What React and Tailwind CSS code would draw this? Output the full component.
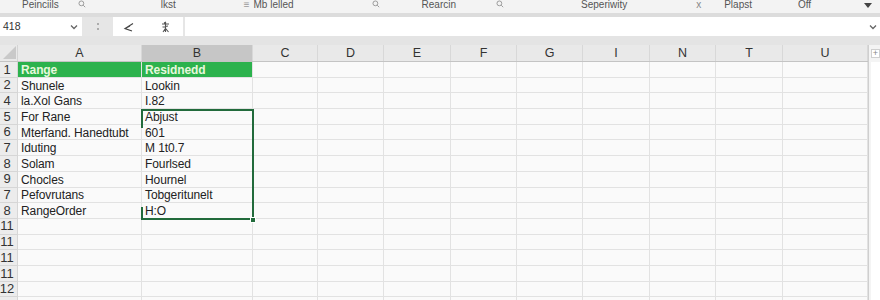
import React from "react";

// column layout of the sheet (widths written out so tailwind picks them up)
const columns = [
  { label: "A", w: "w-[124px]" },
  { label: "B", w: "w-[111px]", active: true },
  { label: "C", w: "w-[65px]" },
  { label: "D", w: "w-[66px]" },
  { label: "E", w: "w-[67px]" },
  { label: "F", w: "w-[66px]" },
  { label: "G", w: "w-[66px]" },
  { label: "I", w: "w-[67px]" },
  { label: "N", w: "w-[66px]" },
  { label: "T", w: "w-[67px]" },
  { label: "U", w: "w-[85px]" },
];

const rows = [
  { n: "1", a: "Range", b: "Residnedd", head: true },
  { n: "2", a: "Shunele", b: "Lookin" },
  { n: "4", a: "la.Xol Gans", b: "I.82" },
  { n: "5", a: "For Rane", b: "Abjust" },
  { n: "6", a: "Mterfand. Hanedtubt", b: "601" },
  { n: "7", a: "Iduting", b: "M 1t0.7" },
  { n: "8", a: "Solam", b: "Fourlsed" },
  { n: "9", a: "Chocles", b: "Hournel" },
  { n: "7", a: "Pefovrutans", b: "Tobgeritunelt" },
  { n: "8", a: "RangeOrder", b: "H:O" },
  { n: "11" },
  { n: "11" },
  { n: "11" },
  { n: "11" },
  { n: "12" },
  { n: "" }, // partly visible row below the fold
];

const SearchIcon = () => (
  <svg width="8" height="8" viewBox="0 0 10 10" className="text-[#999]">
    <circle cx="4.2" cy="4.2" r="3" fill="none" stroke="currentColor" strokeWidth="1.2" />
    <path d="M6.5 6.5 L9 9" stroke="currentColor" strokeWidth="1.2" />
  </svg>
);

const Sep = () => <span className="w-px h-[8px] bg-[#c8c8c8]" />;

const Chevron = () => (
  <svg width="8" height="6" viewBox="0 0 8 6">
    <path d="M1 1.5 L4 4.5 L7 1.5" fill="none" stroke="#666" strokeWidth="1.3" />
  </svg>
);

const App = () => {
  return (
    <div className="w-[880px] h-[300px] overflow-hidden bg-[#fafafa] font-['Liberation_Sans',Arial,sans-serif] text-[#222]">
      {/* ribbon strip */}
      <div className="h-[13px] bg-[#f3f3f3] overflow-hidden flex items-start text-[10px] leading-[11px] text-[#555]">
        <span className="ml-[22px] -mt-[1px]">Peinciils</span>
        <span className="ml-[19px]"><SearchIcon /></span>
        <span className="ml-[3px] mt-[1px]"><Sep /></span>
        <span className="ml-[72px] -mt-[1px]">lkst</span>
        <span className="ml-[68px] -mt-[1px] text-[#999]">≡</span>
        <span className="ml-[4px] -mt-[1px]">Mb lelled</span>
        <span className="ml-[78px]"><SearchIcon /></span>
        <span className="ml-[3px] mt-[1px]"><Sep /></span>
        <span className="ml-[39px] -mt-[1px]">Rearcin</span>
        <span className="ml-[40px]"><SearchIcon /></span>
        <span className="ml-[3px] mt-[1px]"><Sep /></span>
        <span className="ml-[74px] -mt-[1px]">Seperiwity</span>
        <span className="ml-[69px] -mt-[1px] text-[#888]">x</span>
        <span className="ml-[23px] -mt-[1px]">Plapst</span>
        <span className="ml-[25px] mt-[1px]"><Sep /></span>
        <span className="ml-[21px] -mt-[1px]">Off</span>
        <span className="ml-[20px] mt-[1px]"><Sep /></span>
        <span className="ml-[33px] mt-[3px] w-0 h-0 border-l-[4px] border-r-[4px] border-t-[5px] border-l-transparent border-r-transparent border-t-[#444]" />
      </div>
      <div className="h-[4px] bg-[#dcdcdc]" />

      {/* formula bar */}
      <div className="h-[19px] flex bg-[#e6e6e6]">
        <div className="w-[82px] bg-white flex items-center justify-between pl-[3px] pr-[4px]">
          <span className="text-[10.5px] text-[#333]">418</span>
          <Chevron />
        </div>
        <div className="w-[31px] flex flex-col items-center justify-center gap-[3px]">
          <span className="w-[2px] h-[2px] rounded-full bg-[#999]" />
          <span className="w-[2px] h-[2px] rounded-full bg-[#999]" />
        </div>
        <div className="w-[70px] bg-white flex items-center">
          <svg width="12" height="10" viewBox="0 0 12 10" className="ml-[10px]">
            <path d="M10 1.5 L2 6.5 L9 9 M2 6.5 L7 4" fill="none" stroke="#444" strokeWidth="1.2" />
          </svg>
          <svg width="9" height="12" viewBox="0 0 9 12" className="ml-[26px]">
            <path d="M4.5 1 V11 M1 3 H8 M1.5 6 L7 5 M2 11 L4.5 7.5 L7.5 11 M3 2 L5 1" fill="none" stroke="#555" strokeWidth="1.1" />
          </svg>
        </div>
        <div className="flex-1 ml-[2px] bg-white flex items-center justify-end pr-[3px]">
          <Chevron />
        </div>
      </div>
      <div className="h-[9px] bg-[#e4e4e4]" />

      <div className="flex">
        <div className="w-[868px]">
          {/* column headers */}
          <div className="h-[17px] flex bg-[#e9e9e9] border-b border-[#c4c4c4]">
            <div className="w-[18px] relative border-r border-[#d4d4d4]">
              <svg width="13" height="13" viewBox="0 0 13 13" className="absolute right-[1px] bottom-[2px]">
                <path d="M13 0 V13 H0 Z" fill="#c9c9c9" />
              </svg>
            </div>
            {columns.map((col) => (
              <div
                key={col.label}
                className={`${col.w} flex items-center justify-center text-[12.5px] text-[#333] border-r border-[#d8d8d8] ${
                  col.active ? "bg-[#c6c6c6]" : ""
                }`}
              >
                {col.label}
              </div>
            ))}
          </div>

          {/* cells */}
          <div className="relative">
            {rows.map((row, i) => (
              <div key={i} className="h-[15.7px] flex">
                <div className="w-[18px] bg-[#ececec] border-r border-b border-[#d6d6d6] flex items-center justify-center pr-[3px] text-[13px] text-[#333]">
                  {row.n}
                </div>
                {columns.map((col, j) => (
                  <div
                    key={col.label}
                    className={`${col.w} border-r border-b border-[#e2e2e2] flex items-center pl-[3px] pt-[1px] text-[12px] tracking-[-0.1px] whitespace-nowrap overflow-hidden ${
                      row.head && j < 2
                        ? "bg-[#2cb24d] text-[#e6f8dc] font-bold border-[#2cb24d]"
                        : ""
                    }`}
                  >
                    {j === 0 ? row.a : j === 1 ? row.b : ""}
                  </div>
                ))}
              </div>
            ))}

            {/* selection range B5:B10 */}
            <div className="absolute left-[141px] top-[47px] w-[113px] h-[111px] border-t-2 border-r-2 border-b-2 border-[#226b3c]" />
            <div className="absolute left-[141px] top-[47px] w-[2px] h-[19px] bg-[#226b3c]" />
            <div className="absolute left-[141px] top-[145px] w-[2px] h-[13px] bg-[#226b3c]" />
            <div className="absolute left-[250px] top-[155px] w-[6px] h-[6px] bg-[#226b3c] border border-white" />
          </div>
        </div>

        {/* vertical scroll strip */}
        <div className="w-[12px] bg-[#f4f4f4] border-l border-[#cfcfcf] pt-[4px] pl-[2px]">
          <div className="w-[9px] h-[9px] bg-white border border-[#cfcfcf] flex items-center justify-center text-[9px] leading-none text-[#888]">
            +
          </div>
          <div className="mt-[4px] w-[9px] h-[240px] bg-white" />
        </div>
      </div>
    </div>
  );
};

export default App;
